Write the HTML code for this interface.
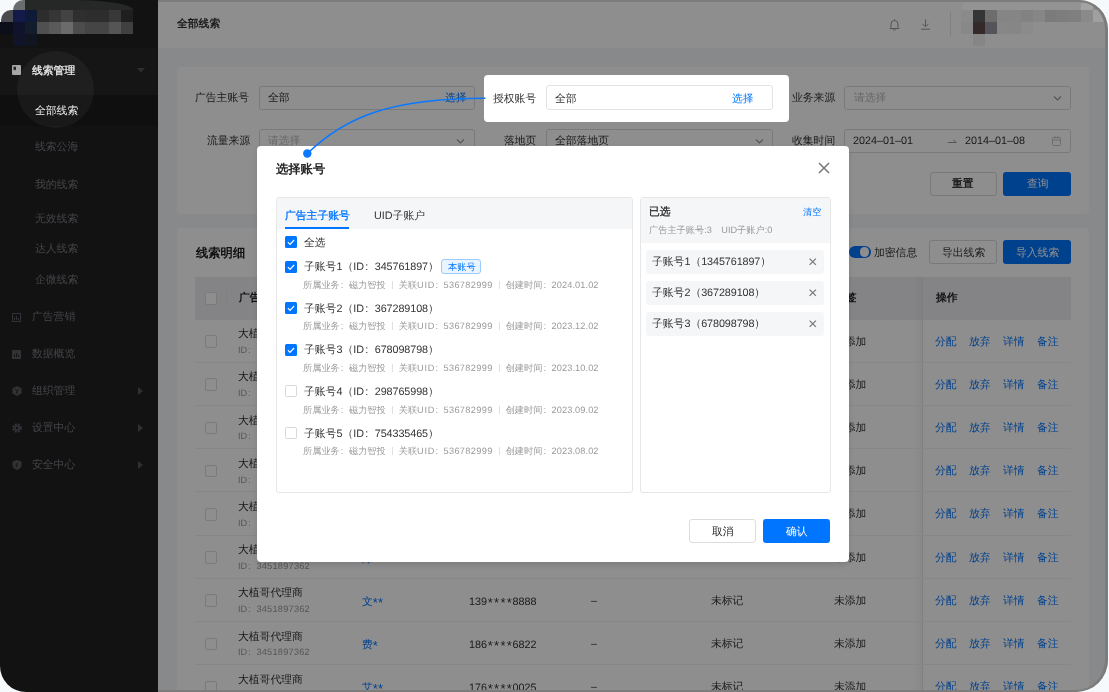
<!DOCTYPE html><html><head><meta charset="utf-8"><style>.col{display:inline-block;width:1em;text-indent:0.12em;}.dg{letter-spacing:-0.1px;}.ast{display:inline-block;width:6.4px;text-align:center;font-size:13px;position:relative;top:1.5px;}.sep{display:inline-block;width:1px;height:8px;background:#e0e0e0;margin:0 6px;vertical-align:-1px;}
html,body{margin:0;padding:0;width:1109px;height:692px;overflow:hidden;background:#f6f9fc;font-family:"Liberation Sans", sans-serif;}
.t{position:absolute;white-space:nowrap;text-rendering:geometricPrecision;will-change:transform;}
.b{position:absolute;box-sizing:border-box;}
#win{position:absolute;left:0;top:0;width:1108px;height:692px;border-radius:30px 29px 32px 26px;overflow:hidden;background:#f4f6f8;}
</style></head><body><div id="win">
<div class="b" style="left:158px;top:0px;width:950px;height:48px;background:#fff;"></div>
<div class="t" style="left:177px;top:16.30px;font-size:10.8px;line-height:16px;color:#1f1f1f;font-weight:400;-webkit-text-stroke:0.3px #1f1f1f;">全部线索</div>
<svg class="b" style="left:888px;top:18px" width="13" height="13" viewBox="0 0 13 13"><path d="M3 9.5V6a3.5 3.5 0 0 1 7 0v3.5l1 1H2z" fill="none" stroke="#999" stroke-width="1"/><path d="M5.2 11.3a1.4 1.4 0 0 0 2.6 0" fill="none" stroke="#999" stroke-width="1"/><path d="M6.5 1.2v1.2" stroke="#999" stroke-width="1"/></svg>
<svg class="b" style="left:919px;top:18px" width="13" height="13" viewBox="0 0 13 13"><path d="M6.5 1.5v7M3.5 5.8l3 3 3-3M2 11.2h9" fill="none" stroke="#999" stroke-width="1"/></svg>
<div class="b" style="left:950px;top:12px;width:1px;height:24px;background:#e6e6e6;"></div>
<div class="b" style="left:177px;top:67px;width:912px;height:147px;background:#fff;border-radius:4px;"></div>
<div class="t" style="left:195.4px;top:89.80px;font-size:10.8px;line-height:16px;color:#333;font-weight:400;">广告主账号</div>
<div class="b" style="left:258.5px;top:85.5px;width:216.0px;height:24.0px;background:#fff;border:1px solid #dcdcdc;border-radius:3px;"></div>
<div class="t" style="left:268px;top:89.80px;font-size:10.8px;line-height:16px;color:#333;font-weight:400;">全部</div>
<div class="t" style="left:444.5px;top:89.80px;font-size:10.8px;line-height:16px;color:#0075ff;font-weight:400;">选择</div>
<div class="t" style="left:792px;top:89.80px;font-size:10.8px;line-height:16px;color:#333;font-weight:400;">业务来源</div>
<div class="b" style="left:844px;top:85.5px;width:226.5px;height:24.0px;background:#fff;border:1px solid #dcdcdc;border-radius:3px;"></div>
<div class="t" style="left:853.5px;top:89.80px;font-size:10.8px;line-height:16px;color:#bbb;font-weight:400;">请选择</div>
<svg class="b" style="left:1052.5px;top:93.5px" width="9" height="8" viewBox="0 0 9 8"><path d="M1 2.5l3.5 3.5 3.5-3.5" fill="none" stroke="#999" stroke-width="1.1"/></svg>
<div class="t" style="left:206.6px;top:133.40px;font-size:10.8px;line-height:16px;color:#333;font-weight:400;">流量来源</div>
<div class="b" style="left:258.5px;top:128.8px;width:216.0px;height:24.0px;background:#fff;border:1px solid #dcdcdc;border-radius:3px;"></div>
<div class="t" style="left:268px;top:133.40px;font-size:10.8px;line-height:16px;color:#bbb;font-weight:400;">请选择</div>
<svg class="b" style="left:456.3px;top:137px" width="9" height="8" viewBox="0 0 9 8"><path d="M1 2.5l3.5 3.5 3.5-3.5" fill="none" stroke="#999" stroke-width="1.1"/></svg>
<div class="t" style="left:504px;top:133.40px;font-size:10.8px;line-height:16px;color:#333;font-weight:400;">落地页</div>
<div class="b" style="left:546px;top:128.8px;width:226.5px;height:24.0px;background:#fff;border:1px solid #dcdcdc;border-radius:3px;"></div>
<div class="t" style="left:555px;top:133.40px;font-size:10.8px;line-height:16px;color:#333;font-weight:400;">全部落地页</div>
<svg class="b" style="left:755px;top:136.8px" width="9" height="8" viewBox="0 0 9 8"><path d="M1 2.5l3.5 3.5 3.5-3.5" fill="none" stroke="#999" stroke-width="1.1"/></svg>
<div class="t" style="left:792px;top:133.40px;font-size:10.8px;line-height:16px;color:#333;font-weight:400;">收集时间</div>
<div class="b" style="left:844px;top:128.8px;width:226.5px;height:24.0px;background:#fff;border:1px solid #dcdcdc;border-radius:3px;"></div>
<div class="t" style="left:853px;top:133.40px;font-size:10.8px;line-height:16px;color:#333;font-weight:400;">2024–01–01</div>
<svg class="b" style="left:947.5px;top:137px" width="9" height="7" viewBox="0 0 9 7"><path d="M0 5.5h8.2L5.5 2.8" fill="none" stroke="#999" stroke-width="1"/></svg>
<div class="t" style="left:964.5px;top:133.40px;font-size:10.8px;line-height:16px;color:#333;font-weight:400;">2014–01–08</div>
<svg class="b" style="left:1051px;top:135px" width="11" height="11" viewBox="0 0 11 11"><rect x="1.5" y="2.5" width="8" height="8" rx="1" fill="none" stroke="#c4c4c4" stroke-width="1"/><path d="M1.5 5h8M4 1v2.5M7 1v2.5" stroke="#c4c4c4" stroke-width="1"/></svg>
<div class="b" style="left:929.5px;top:172px;width:67.5px;height:24px;background:#fff;border:1px solid #d9d9d9;border-radius:3px;"></div>
<div class="t" style="left:952.3px;top:176.30px;font-size:10.8px;line-height:16px;color:#1f1f1f;font-weight:400;-webkit-text-stroke:0.3px #1f1f1f;">重置</div>
<div class="b" style="left:1003px;top:172px;width:68px;height:24px;background:#0075ff;border-radius:3px;"></div>
<div class="t" style="left:1026.8px;top:176.30px;font-size:10.8px;line-height:16px;color:#fff;font-weight:400;">查询</div>
<div class="b" style="left:177px;top:227.5px;width:912px;height:472.5px;background:#fff;border-radius:4px;"></div>
<div class="t" style="left:195.5px;top:245.30px;font-size:12.3px;line-height:16px;color:#1f1f1f;font-weight:700;">线索明细</div>
<div class="b" style="left:849px;top:245.5px;width:21.5px;height:12.5px;background:#0075ff;border-radius:7px;"></div>
<div class="b" style="left:859.5px;top:247px;width:9.5px;height:9.5px;background:#fff;border-radius:50%;"></div>
<div class="t" style="left:874px;top:244.90px;font-size:10.8px;line-height:16px;color:#333;font-weight:400;">加密信息</div>
<div class="b" style="left:928.8px;top:239.5px;width:68.20000000000005px;height:24.5px;background:#fff;border:1px solid #d9d9d9;border-radius:3px;"></div>
<div class="t" style="left:942px;top:245.00px;font-size:10.8px;line-height:16px;color:#333;font-weight:400;">导出线索</div>
<div class="b" style="left:1003px;top:239.5px;width:68px;height:24.5px;background:#0075ff;border-radius:3px;"></div>
<div class="t" style="left:1016px;top:245.00px;font-size:10.8px;line-height:16px;color:#fff;font-weight:400;">导入线索</div>
<div class="b" style="left:195px;top:277px;width:876px;height:42.5px;background:#edeef0;"></div>
<div class="b" style="left:204.5px;top:292px;width:12.5px;height:12.5px;background:#fff;border:1px solid #dcdcdc;border-radius:2px;"></div>
<div class="b" style="left:225.5px;top:290px;width:1.0px;height:17.5px;background:#e6e6e6;"></div>
<div class="t" style="left:238.6px;top:290.30px;font-size:10.8px;line-height:16px;color:#1f1f1f;font-weight:700;">广告主账号</div>
<div class="t" style="left:362px;top:290.30px;font-size:10.8px;line-height:16px;color:#1f1f1f;font-weight:700;">客户姓名</div>
<div class="t" style="left:469.5px;top:290.30px;font-size:10.8px;line-height:16px;color:#1f1f1f;font-weight:700;">手机号</div>
<div class="t" style="left:590px;top:290.30px;font-size:10.8px;line-height:16px;color:#1f1f1f;font-weight:700;">微信</div>
<div class="t" style="left:710.8px;top:290.30px;font-size:10.8px;line-height:16px;color:#1f1f1f;font-weight:700;">标记</div>
<div class="t" style="left:835px;top:290.30px;font-size:10.8px;line-height:16px;color:#1f1f1f;font-weight:700;">标签</div>
<div class="t" style="left:936px;top:290.30px;font-size:10.8px;line-height:16px;color:#1f1f1f;font-weight:700;">操作</div>
<div class="b" style="left:912px;top:277px;width:10px;height:423px;background:linear-gradient(to right,rgba(0,0,0,0),rgba(0,0,0,0.035));"></div>
<div class="b" style="left:922px;top:277px;width:1px;height:423px;background:#e4e4e4;"></div>
<div class="b" style="left:204.5px;top:335.2px;width:12.5px;height:12.5px;background:#fff;border:1px solid #dcdcdc;border-radius:2px;"></div>
<div class="t" style="left:238px;top:326.10px;font-size:10.8px;line-height:16px;color:#333;font-weight:400;">大植哥代理商</div>
<div class="t" style="left:238px;top:341.90px;font-size:9.2px;line-height:16px;color:#999;font-weight:400;">ID<span class="col">:</span><span style="letter-spacing:0.25px">3451897362</span></div>
<div class="t" style="left:362.2px;top:333.50px;font-size:10.8px;line-height:16px;color:#0075ff;font-weight:400;">王<span class="ast" style="width:5.2px">*</span><span class="ast" style="width:5.2px">*</span></div>
<div class="t" style="left:834.2px;top:333.50px;font-size:10.8px;line-height:16px;color:#333;font-weight:400;">未添加</div>
<div class="t" style="left:934.8px;top:333.50px;font-size:10.8px;line-height:16px;color:#0075ff;font-weight:400;">分配</div>
<div class="t" style="left:968.6px;top:333.50px;font-size:10.8px;line-height:16px;color:#0075ff;font-weight:400;">放弃</div>
<div class="t" style="left:1003px;top:333.50px;font-size:10.8px;line-height:16px;color:#0075ff;font-weight:400;">详情</div>
<div class="t" style="left:1036.9px;top:333.50px;font-size:10.8px;line-height:16px;color:#0075ff;font-weight:400;">备注</div>
<div class="b" style="left:194.6px;top:361.7px;width:876.4px;height:1.0px;background:#f2f2f2;"></div>
<div class="b" style="left:204.5px;top:378.4px;width:12.5px;height:12.5px;background:#fff;border:1px solid #dcdcdc;border-radius:2px;"></div>
<div class="t" style="left:238px;top:369.30px;font-size:10.8px;line-height:16px;color:#333;font-weight:400;">大植哥代理商</div>
<div class="t" style="left:238px;top:385.10px;font-size:9.2px;line-height:16px;color:#999;font-weight:400;">ID<span class="col">:</span><span style="letter-spacing:0.25px">3451897362</span></div>
<div class="t" style="left:362.2px;top:376.70px;font-size:10.8px;line-height:16px;color:#0075ff;font-weight:400;">李<span class="ast" style="width:5.2px">*</span></div>
<div class="t" style="left:834.2px;top:376.70px;font-size:10.8px;line-height:16px;color:#333;font-weight:400;">未添加</div>
<div class="t" style="left:934.8px;top:376.70px;font-size:10.8px;line-height:16px;color:#0075ff;font-weight:400;">分配</div>
<div class="t" style="left:968.6px;top:376.70px;font-size:10.8px;line-height:16px;color:#0075ff;font-weight:400;">放弃</div>
<div class="t" style="left:1003px;top:376.70px;font-size:10.8px;line-height:16px;color:#0075ff;font-weight:400;">详情</div>
<div class="t" style="left:1036.9px;top:376.70px;font-size:10.8px;line-height:16px;color:#0075ff;font-weight:400;">备注</div>
<div class="b" style="left:194.6px;top:404.9px;width:876.4px;height:1.0px;background:#f2f2f2;"></div>
<div class="b" style="left:204.5px;top:421.6px;width:12.5px;height:12.5px;background:#fff;border:1px solid #dcdcdc;border-radius:2px;"></div>
<div class="t" style="left:238px;top:412.50px;font-size:10.8px;line-height:16px;color:#333;font-weight:400;">大植哥代理商</div>
<div class="t" style="left:238px;top:428.30px;font-size:9.2px;line-height:16px;color:#999;font-weight:400;">ID<span class="col">:</span><span style="letter-spacing:0.25px">3451897362</span></div>
<div class="t" style="left:362.2px;top:419.90px;font-size:10.8px;line-height:16px;color:#0075ff;font-weight:400;">张<span class="ast" style="width:5.2px">*</span><span class="ast" style="width:5.2px">*</span></div>
<div class="t" style="left:834.2px;top:419.90px;font-size:10.8px;line-height:16px;color:#333;font-weight:400;">未添加</div>
<div class="t" style="left:934.8px;top:419.90px;font-size:10.8px;line-height:16px;color:#0075ff;font-weight:400;">分配</div>
<div class="t" style="left:968.6px;top:419.90px;font-size:10.8px;line-height:16px;color:#0075ff;font-weight:400;">放弃</div>
<div class="t" style="left:1003px;top:419.90px;font-size:10.8px;line-height:16px;color:#0075ff;font-weight:400;">详情</div>
<div class="t" style="left:1036.9px;top:419.90px;font-size:10.8px;line-height:16px;color:#0075ff;font-weight:400;">备注</div>
<div class="b" style="left:194.6px;top:448.1px;width:876.4px;height:1.0px;background:#f2f2f2;"></div>
<div class="b" style="left:204.5px;top:464.8px;width:12.5px;height:12.5px;background:#fff;border:1px solid #dcdcdc;border-radius:2px;"></div>
<div class="t" style="left:238px;top:455.70px;font-size:10.8px;line-height:16px;color:#333;font-weight:400;">大植哥代理商</div>
<div class="t" style="left:238px;top:471.50px;font-size:9.2px;line-height:16px;color:#999;font-weight:400;">ID<span class="col">:</span><span style="letter-spacing:0.25px">3451897362</span></div>
<div class="t" style="left:362.2px;top:463.10px;font-size:10.8px;line-height:16px;color:#0075ff;font-weight:400;">赵<span class="ast" style="width:5.2px">*</span></div>
<div class="t" style="left:834.2px;top:463.10px;font-size:10.8px;line-height:16px;color:#333;font-weight:400;">未添加</div>
<div class="t" style="left:934.8px;top:463.10px;font-size:10.8px;line-height:16px;color:#0075ff;font-weight:400;">分配</div>
<div class="t" style="left:968.6px;top:463.10px;font-size:10.8px;line-height:16px;color:#0075ff;font-weight:400;">放弃</div>
<div class="t" style="left:1003px;top:463.10px;font-size:10.8px;line-height:16px;color:#0075ff;font-weight:400;">详情</div>
<div class="t" style="left:1036.9px;top:463.10px;font-size:10.8px;line-height:16px;color:#0075ff;font-weight:400;">备注</div>
<div class="b" style="left:194.6px;top:491.3px;width:876.4px;height:1.0px;background:#f2f2f2;"></div>
<div class="b" style="left:204.5px;top:508.0px;width:12.5px;height:12.5px;background:#fff;border:1px solid #dcdcdc;border-radius:2px;"></div>
<div class="t" style="left:238px;top:498.90px;font-size:10.8px;line-height:16px;color:#333;font-weight:400;">大植哥代理商</div>
<div class="t" style="left:238px;top:514.70px;font-size:9.2px;line-height:16px;color:#999;font-weight:400;">ID<span class="col">:</span><span style="letter-spacing:0.25px">3451897362</span></div>
<div class="t" style="left:362.2px;top:506.30px;font-size:10.8px;line-height:16px;color:#0075ff;font-weight:400;">刘<span class="ast" style="width:5.2px">*</span><span class="ast" style="width:5.2px">*</span></div>
<div class="t" style="left:834.2px;top:506.30px;font-size:10.8px;line-height:16px;color:#333;font-weight:400;">未添加</div>
<div class="t" style="left:934.8px;top:506.30px;font-size:10.8px;line-height:16px;color:#0075ff;font-weight:400;">分配</div>
<div class="t" style="left:968.6px;top:506.30px;font-size:10.8px;line-height:16px;color:#0075ff;font-weight:400;">放弃</div>
<div class="t" style="left:1003px;top:506.30px;font-size:10.8px;line-height:16px;color:#0075ff;font-weight:400;">详情</div>
<div class="t" style="left:1036.9px;top:506.30px;font-size:10.8px;line-height:16px;color:#0075ff;font-weight:400;">备注</div>
<div class="b" style="left:194.6px;top:534.5px;width:876.4px;height:1.0px;background:#f2f2f2;"></div>
<div class="b" style="left:204.5px;top:551.2px;width:12.5px;height:12.5px;background:#fff;border:1px solid #dcdcdc;border-radius:2px;"></div>
<div class="t" style="left:238px;top:542.10px;font-size:10.8px;line-height:16px;color:#333;font-weight:400;">大植哥代理商</div>
<div class="t" style="left:238px;top:557.90px;font-size:9.2px;line-height:16px;color:#999;font-weight:400;">ID<span class="col">:</span><span style="letter-spacing:0.25px">3451897362</span></div>
<div class="t" style="left:362.2px;top:549.50px;font-size:10.8px;line-height:16px;color:#0075ff;font-weight:400;">陈<span class="ast" style="width:5.2px">*</span></div>
<div class="t" style="left:834.2px;top:549.50px;font-size:10.8px;line-height:16px;color:#333;font-weight:400;">未添加</div>
<div class="t" style="left:934.8px;top:549.50px;font-size:10.8px;line-height:16px;color:#0075ff;font-weight:400;">分配</div>
<div class="t" style="left:968.6px;top:549.50px;font-size:10.8px;line-height:16px;color:#0075ff;font-weight:400;">放弃</div>
<div class="t" style="left:1003px;top:549.50px;font-size:10.8px;line-height:16px;color:#0075ff;font-weight:400;">详情</div>
<div class="t" style="left:1036.9px;top:549.50px;font-size:10.8px;line-height:16px;color:#0075ff;font-weight:400;">备注</div>
<div class="b" style="left:194.6px;top:577.7px;width:876.4px;height:1.0px;background:#f2f2f2;"></div>
<div class="b" style="left:204.5px;top:594.4000000000001px;width:12.5px;height:12.5px;background:#fff;border:1px solid #dcdcdc;border-radius:2px;"></div>
<div class="t" style="left:238px;top:585.30px;font-size:10.8px;line-height:16px;color:#333;font-weight:400;">大植哥代理商</div>
<div class="t" style="left:238px;top:601.10px;font-size:9.2px;line-height:16px;color:#999;font-weight:400;">ID<span class="col">:</span><span style="letter-spacing:0.25px">3451897362</span></div>
<div class="t" style="left:362.2px;top:592.70px;font-size:10.8px;line-height:16px;color:#0075ff;font-weight:400;">文<span class="ast" style="width:5.2px">*</span><span class="ast" style="width:5.2px">*</span></div>
<div class="t" style="left:468.5px;top:592.70px;font-size:10.8px;line-height:16px;color:#333;font-weight:400;">139<span class="ast">*</span><span class="ast">*</span><span class="ast">*</span><span class="ast">*</span>8888</div>
<div class="t" style="left:590.5px;top:592.70px;font-size:10.8px;line-height:16px;color:#333;font-weight:400;">–</div>
<div class="t" style="left:710.8px;top:592.70px;font-size:10.8px;line-height:16px;color:#333;font-weight:400;">未标记</div>
<div class="t" style="left:834.2px;top:592.70px;font-size:10.8px;line-height:16px;color:#333;font-weight:400;">未添加</div>
<div class="t" style="left:934.8px;top:592.70px;font-size:10.8px;line-height:16px;color:#0075ff;font-weight:400;">分配</div>
<div class="t" style="left:968.6px;top:592.70px;font-size:10.8px;line-height:16px;color:#0075ff;font-weight:400;">放弃</div>
<div class="t" style="left:1003px;top:592.70px;font-size:10.8px;line-height:16px;color:#0075ff;font-weight:400;">详情</div>
<div class="t" style="left:1036.9px;top:592.70px;font-size:10.8px;line-height:16px;color:#0075ff;font-weight:400;">备注</div>
<div class="b" style="left:194.6px;top:620.9000000000001px;width:876.4px;height:1.0px;background:#f2f2f2;"></div>
<div class="b" style="left:204.5px;top:637.6px;width:12.5px;height:12.5px;background:#fff;border:1px solid #dcdcdc;border-radius:2px;"></div>
<div class="t" style="left:238px;top:628.50px;font-size:10.8px;line-height:16px;color:#333;font-weight:400;">大植哥代理商</div>
<div class="t" style="left:238px;top:644.30px;font-size:9.2px;line-height:16px;color:#999;font-weight:400;">ID<span class="col">:</span><span style="letter-spacing:0.25px">3451897362</span></div>
<div class="t" style="left:362.2px;top:635.90px;font-size:10.8px;line-height:16px;color:#0075ff;font-weight:400;">费<span class="ast" style="width:5.2px">*</span></div>
<div class="t" style="left:468.5px;top:635.90px;font-size:10.8px;line-height:16px;color:#333;font-weight:400;">186<span class="ast">*</span><span class="ast">*</span><span class="ast">*</span><span class="ast">*</span>6822</div>
<div class="t" style="left:590.5px;top:635.90px;font-size:10.8px;line-height:16px;color:#333;font-weight:400;">–</div>
<div class="t" style="left:710.8px;top:635.90px;font-size:10.8px;line-height:16px;color:#333;font-weight:400;">未标记</div>
<div class="t" style="left:834.2px;top:635.90px;font-size:10.8px;line-height:16px;color:#333;font-weight:400;">未添加</div>
<div class="t" style="left:934.8px;top:635.90px;font-size:10.8px;line-height:16px;color:#0075ff;font-weight:400;">分配</div>
<div class="t" style="left:968.6px;top:635.90px;font-size:10.8px;line-height:16px;color:#0075ff;font-weight:400;">放弃</div>
<div class="t" style="left:1003px;top:635.90px;font-size:10.8px;line-height:16px;color:#0075ff;font-weight:400;">详情</div>
<div class="t" style="left:1036.9px;top:635.90px;font-size:10.8px;line-height:16px;color:#0075ff;font-weight:400;">备注</div>
<div class="b" style="left:194.6px;top:664.1px;width:876.4px;height:1.0px;background:#f2f2f2;"></div>
<div class="b" style="left:204.5px;top:680.8px;width:12.5px;height:12.5px;background:#fff;border:1px solid #dcdcdc;border-radius:2px;"></div>
<div class="t" style="left:238px;top:671.70px;font-size:10.8px;line-height:16px;color:#333;font-weight:400;">大植哥代理商</div>
<div class="t" style="left:238px;top:687.50px;font-size:9.2px;line-height:16px;color:#999;font-weight:400;">ID<span class="col">:</span><span style="letter-spacing:0.25px">3451897362</span></div>
<div class="t" style="left:362.2px;top:679.10px;font-size:10.8px;line-height:16px;color:#0075ff;font-weight:400;">艾<span class="ast" style="width:5.2px">*</span><span class="ast" style="width:5.2px">*</span></div>
<div class="t" style="left:468.5px;top:679.10px;font-size:10.8px;line-height:16px;color:#333;font-weight:400;">176<span class="ast">*</span><span class="ast">*</span><span class="ast">*</span><span class="ast">*</span>0025</div>
<div class="t" style="left:590.5px;top:679.10px;font-size:10.8px;line-height:16px;color:#333;font-weight:400;">–</div>
<div class="t" style="left:710.8px;top:679.10px;font-size:10.8px;line-height:16px;color:#333;font-weight:400;">未标记</div>
<div class="t" style="left:834.2px;top:679.10px;font-size:10.8px;line-height:16px;color:#333;font-weight:400;">未添加</div>
<div class="t" style="left:934.8px;top:679.10px;font-size:10.8px;line-height:16px;color:#0075ff;font-weight:400;">分配</div>
<div class="t" style="left:968.6px;top:679.10px;font-size:10.8px;line-height:16px;color:#0075ff;font-weight:400;">放弃</div>
<div class="t" style="left:1003px;top:679.10px;font-size:10.8px;line-height:16px;color:#0075ff;font-weight:400;">详情</div>
<div class="t" style="left:1036.9px;top:679.10px;font-size:10.8px;line-height:16px;color:#0075ff;font-weight:400;">备注</div>
<div class="b" style="left:194.6px;top:707.3px;width:876.4px;height:1.0px;background:#f2f2f2;"></div>
<div class="b" style="left:0px;top:0px;width:1108px;height:692px;background:rgba(0,0,0,0.443);"></div>
<div class="b" style="left:0px;top:0px;width:158px;height:692px;background:#121212;"></div>
<div class="b" style="left:0px;top:94.5px;width:158px;height:31.0px;background:#0f0f0f;"></div>
<div class="b" style="left:0px;top:48px;width:158px;height:46.5px;background:#151515;"></div>
<div class="b" style="left:17.3px;top:50.5px;width:77px;height:77px;border-radius:50%;background:rgba(255,255,255,0.045);"></div>
<svg class="b" style="left:12px;top:65px" width="9" height="10" viewBox="0 0 9 10"><rect x="0" y="0" width="9" height="10" rx="1" fill="#a6a6a6"/><path d="M1.6 1.8h2.3v3.7L2.75 4.6 1.6 5.5z" fill="#1a1a1a"/></svg>
<div class="t" style="left:32px;top:62.50px;font-size:10.8px;line-height:16px;color:#ececec;font-weight:400;-webkit-text-stroke:0.3px #ececec;">线索管理</div>
<svg class="b" style="left:137px;top:68px" width="8" height="5" viewBox="0 0 8 5"><path d="M0 0h8L4 4.5z" fill="#2e2e32"/></svg>
<div class="t" style="left:35px;top:102.60px;font-size:10.8px;line-height:16px;color:#f0f0f0;font-weight:400;">全部线索</div>
<div class="t" style="left:35px;top:139.40px;font-size:10.8px;line-height:16px;color:#45454a;font-weight:400;">线索公海</div>
<div class="t" style="left:35px;top:176.70px;font-size:10.8px;line-height:16px;color:#45454a;font-weight:400;">我的线索</div>
<div class="t" style="left:35px;top:210.50px;font-size:10.8px;line-height:16px;color:#45454a;font-weight:400;">无效线索</div>
<div class="t" style="left:35px;top:241.30px;font-size:10.8px;line-height:16px;color:#45454a;font-weight:400;">达人线索</div>
<div class="t" style="left:35px;top:271.60px;font-size:10.8px;line-height:16px;color:#45454a;font-weight:400;">企微线索</div>
<div class="t" style="left:32px;top:309.10px;font-size:10.8px;line-height:16px;color:#45454a;font-weight:400;">广告营销</div>
<div class="t" style="left:32px;top:346.20px;font-size:10.8px;line-height:16px;color:#45454a;font-weight:400;">数据概览</div>
<div class="t" style="left:32px;top:383.00px;font-size:10.8px;line-height:16px;color:#45454a;font-weight:400;">组织管理</div>
<svg class="b" style="left:138px;top:386.7px" width="6" height="8" viewBox="0 0 6 8"><path d="M0 0v8l5-4z" fill="#303034"/></svg>
<div class="t" style="left:32px;top:419.90px;font-size:10.8px;line-height:16px;color:#45454a;font-weight:400;">设置中心</div>
<svg class="b" style="left:138px;top:423.6px" width="6" height="8" viewBox="0 0 6 8"><path d="M0 0v8l5-4z" fill="#303034"/></svg>
<div class="t" style="left:32px;top:457.20px;font-size:10.8px;line-height:16px;color:#45454a;font-weight:400;">安全中心</div>
<svg class="b" style="left:138px;top:460.9px" width="6" height="8" viewBox="0 0 6 8"><path d="M0 0v8l5-4z" fill="#303034"/></svg>
<svg class="b" style="left:12px;top:312.5px" width="9" height="9" viewBox="0 0 9 9"><rect x=".5" y=".5" width="8" height="8" fill="none" stroke="#323236"/><path d="M2.5 7V4.5M4.5 7V3M6.5 7V5" stroke="#323236"/></svg>
<svg class="b" style="left:12px;top:349.5px" width="9" height="9" viewBox="0 0 9 9"><rect x="0" y="0" width="9" height="9" rx="1" fill="#323236"/><path d="M2.5 7V4.5M4.5 7V3M6.5 7V5" stroke="#141414"/></svg>
<svg class="b" style="left:12px;top:386px" width="10" height="10" viewBox="0 0 10 10"><path d="M5 0l4.5 2.5v5L5 10 .5 7.5v-5z" fill="#323236"/><path d="M3 3l2 2 2-2M5 5v3" stroke="#141414" fill="none"/></svg>
<svg class="b" style="left:12px;top:423px" width="10" height="10" viewBox="0 0 10 10"><circle cx="5" cy="5" r="3.6" fill="none" stroke="#323236" stroke-width="2.4" stroke-dasharray="1.9 1"/><circle cx="5" cy="5" r="3" fill="#323236"/><circle cx="5" cy="5" r="1.3" fill="#141414"/></svg>
<svg class="b" style="left:12px;top:460px" width="10" height="10" viewBox="0 0 10 10"><path d="M5 0l4.5 1.5v3.5c0 2.5-2 4.2-4.5 5-2.5-.8-4.5-2.5-4.5-5V1.5z" fill="#323236"/><path d="M5.5 2.5L3.8 5.3h1.5L4.5 7.5" stroke="#141414" fill="none" stroke-width=".8"/></svg>
<div class="b" style="left:484px;top:74.5px;width:305px;height:47.2px;background:#fff;border-radius:4px;"></div>
<div class="t" style="left:493.3px;top:90.50px;font-size:10.8px;line-height:16px;color:#333;font-weight:400;">授权账号</div>
<div class="b" style="left:546px;top:85px;width:226.5px;height:24.700000000000003px;background:#fff;border:1px solid #e3e3e3;border-radius:3px;"></div>
<div class="t" style="left:555px;top:90.50px;font-size:10.8px;line-height:16px;color:#333;font-weight:400;">全部</div>
<div class="t" style="left:732px;top:90.50px;font-size:10.8px;line-height:16px;color:#0075ff;font-weight:400;">选择</div>
<div class="b" style="left:257px;top:145.6px;width:591.5px;height:416.4px;background:#fff;border-radius:4px;box-shadow:0 3px 6px rgba(0,0,0,0.12);"></div>
<div class="t" style="left:276.3px;top:160.50px;font-size:12.3px;line-height:16px;color:#262626;font-weight:700;">选择账号</div>
<svg class="b" style="left:818px;top:162px" width="12" height="12" viewBox="0 0 12 12"><path d="M1 1l10 10M11 1L1 11" stroke="#777" stroke-width="1.5"/></svg>
<div class="b" style="left:275.7px;top:197px;width:357.3px;height:295.5px;background:#fff;border:1px solid #e6e6e6;border-radius:3px;"></div>
<div class="b" style="left:276.7px;top:198px;width:355.3px;height:31.30000000000001px;background:#f5f6f8;border-top-left-radius:2px;border-top-right-radius:2px;"></div>
<div class="t" style="left:284.8px;top:207.90px;font-size:10.8px;line-height:16px;color:#0075ff;font-weight:400;-webkit-text-stroke:0.3px #0075ff;">广告主子账号</div>
<div class="b" style="left:284.8px;top:227.3px;width:64.30000000000001px;height:2.0px;background:#0075ff;"></div>
<div class="t" style="left:374.4px;top:207.70px;font-size:10.8px;line-height:16px;color:#333;font-weight:400;">UID子账户</div>
<svg class="b" style="left:284.8px;top:236px" width="12" height="12" viewBox="0 0 12 12"><rect width="12" height="12" rx="1.5" fill="#0075ff"/><path d="M2.9 6.2l2.1 2.1 4.1-4.3" fill="none" stroke="#fff" stroke-width="1.2"/></svg>
<div class="t" style="left:303.7px;top:235.20px;font-size:10.8px;line-height:16px;color:#333;font-weight:400;">全选</div>
<svg class="b" style="left:284.8px;top:260.5px" width="12" height="12" viewBox="0 0 12 12"><rect width="12" height="12" rx="1.5" fill="#0075ff"/><path d="M2.9 6.2l2.1 2.1 4.1-4.3" fill="none" stroke="#fff" stroke-width="1.2"/></svg>
<div class="t" style="left:304px;top:259.20px;font-size:10.8px;line-height:16px;color:#333;font-weight:400;">子账号1（ID<span class="col">:</span><span class="dg">345761897</span>）</div>
<div class="t" style="left:303.4px;top:276.70px;font-size:9.2px;line-height:16px;color:#999;font-weight:400;">所属业务<span class="col">:</span>磁力智投<span class="sep"></span>关联<span style="letter-spacing:0.7px">UI</span>D<span class="col">:</span><span style="letter-spacing:0.35px">536782999</span><span class="sep"></span>创建时间<span class="col">:</span><span style="letter-spacing:0.1px">2024.01.02</span></div>
<div class="b" style="left:441px;top:258.8px;width:40px;height:15.0px;background:#eaf4ff;border:1px solid #99cbff;border-radius:3px;"></div>
<div class="t" style="left:447.7px;top:258.90px;font-size:9.2px;line-height:16px;color:#0075ff;font-weight:400;">本账号</div>
<svg class="b" style="left:284.8px;top:302.1px" width="12" height="12" viewBox="0 0 12 12"><rect width="12" height="12" rx="1.5" fill="#0075ff"/><path d="M2.9 6.2l2.1 2.1 4.1-4.3" fill="none" stroke="#fff" stroke-width="1.2"/></svg>
<div class="t" style="left:304px;top:300.80px;font-size:10.8px;line-height:16px;color:#333;font-weight:400;">子账号2（ID<span class="col">:</span><span class="dg">367289108</span>）</div>
<div class="t" style="left:303.4px;top:318.30px;font-size:9.2px;line-height:16px;color:#999;font-weight:400;">所属业务<span class="col">:</span>磁力智投<span class="sep"></span>关联<span style="letter-spacing:0.7px">UI</span>D<span class="col">:</span><span style="letter-spacing:0.35px">536782999</span><span class="sep"></span>创建时间<span class="col">:</span><span style="letter-spacing:0.1px">2023.12.02</span></div>
<svg class="b" style="left:284.8px;top:343.7px" width="12" height="12" viewBox="0 0 12 12"><rect width="12" height="12" rx="1.5" fill="#0075ff"/><path d="M2.9 6.2l2.1 2.1 4.1-4.3" fill="none" stroke="#fff" stroke-width="1.2"/></svg>
<div class="t" style="left:304px;top:342.40px;font-size:10.8px;line-height:16px;color:#333;font-weight:400;">子账号3（ID<span class="col">:</span><span class="dg">678098798</span>）</div>
<div class="t" style="left:303.4px;top:359.90px;font-size:9.2px;line-height:16px;color:#999;font-weight:400;">所属业务<span class="col">:</span>磁力智投<span class="sep"></span>关联<span style="letter-spacing:0.7px">UI</span>D<span class="col">:</span><span style="letter-spacing:0.35px">536782999</span><span class="sep"></span>创建时间<span class="col">:</span><span style="letter-spacing:0.1px">2023.10.02</span></div>
<div class="b" style="left:284.8px;top:385.3px;width:12.0px;height:12.0px;background:#fff;border:1px solid #d9d9d9;border-radius:1.5px;"></div>
<div class="t" style="left:304px;top:384.00px;font-size:10.8px;line-height:16px;color:#333;font-weight:400;">子账号4（ID<span class="col">:</span><span class="dg">298765998</span>）</div>
<div class="t" style="left:303.4px;top:401.50px;font-size:9.2px;line-height:16px;color:#999;font-weight:400;">所属业务<span class="col">:</span>磁力智投<span class="sep"></span>关联<span style="letter-spacing:0.7px">UI</span>D<span class="col">:</span><span style="letter-spacing:0.35px">536782999</span><span class="sep"></span>创建时间<span class="col">:</span><span style="letter-spacing:0.1px">2023.09.02</span></div>
<div class="b" style="left:284.8px;top:426.9px;width:12.0px;height:12.0px;background:#fff;border:1px solid #d9d9d9;border-radius:1.5px;"></div>
<div class="t" style="left:304px;top:425.60px;font-size:10.8px;line-height:16px;color:#333;font-weight:400;">子账号5（ID<span class="col">:</span><span class="dg">754335465</span>）</div>
<div class="t" style="left:303.4px;top:443.10px;font-size:9.2px;line-height:16px;color:#999;font-weight:400;">所属业务<span class="col">:</span>磁力智投<span class="sep"></span>关联<span style="letter-spacing:0.7px">UI</span>D<span class="col">:</span><span style="letter-spacing:0.35px">536782999</span><span class="sep"></span>创建时间<span class="col">:</span><span style="letter-spacing:0.1px">2023.08.02</span></div>
<div class="b" style="left:639.6px;top:197px;width:191.39999999999998px;height:295.5px;background:#fff;border:1px solid #e6e6e6;border-radius:3px;"></div>
<div class="b" style="left:640.6px;top:198px;width:189.39999999999998px;height:44.80000000000001px;background:#f5f6f8;"></div>
<div class="t" style="left:649px;top:204.00px;font-size:10.8px;line-height:16px;color:#262626;font-weight:400;-webkit-text-stroke:0.3px #262626;">已选</div>
<div class="t" style="left:802.7px;top:204.00px;font-size:9.2px;line-height:16px;color:#0075ff;font-weight:400;">清空</div>
<div class="t" style="left:649px;top:222.00px;font-size:9.2px;line-height:16px;color:#999;font-weight:400;">广告主子账号:3<span style="margin-left:9.5px">UID子账户:0</span></div>
<div class="b" style="left:645.6px;top:249.6px;width:178.39999999999998px;height:24.299999999999983px;background:#f5f6f8;border-radius:3px;"></div>
<div class="t" style="left:652.1px;top:253.90px;font-size:10.8px;line-height:16px;color:#333;font-weight:400;">子账号1（<span class="dg">1345761897</span>）</div>
<svg class="b" style="left:809px;top:258.4px" width="7.5" height="7.5" viewBox="0 0 7.5 7.5"><path d="M.6.6l6.3 6.3M6.9.6L.6 6.9" stroke="#7a7a7a" stroke-width="1.3"/></svg>
<div class="b" style="left:645.6px;top:280.6px;width:178.39999999999998px;height:24.30000000000001px;background:#f5f6f8;border-radius:3px;"></div>
<div class="t" style="left:652.1px;top:284.90px;font-size:10.8px;line-height:16px;color:#333;font-weight:400;">子账号2（<span class="dg">367289108</span>）</div>
<svg class="b" style="left:809px;top:289.40000000000003px" width="7.5" height="7.5" viewBox="0 0 7.5 7.5"><path d="M.6.6l6.3 6.3M6.9.6L.6 6.9" stroke="#7a7a7a" stroke-width="1.3"/></svg>
<div class="b" style="left:645.6px;top:311.6px;width:178.39999999999998px;height:24.30000000000001px;background:#f5f6f8;border-radius:3px;"></div>
<div class="t" style="left:652.1px;top:315.90px;font-size:10.8px;line-height:16px;color:#333;font-weight:400;">子账号3（<span class="dg">678098798</span>）</div>
<svg class="b" style="left:809px;top:320.40000000000003px" width="7.5" height="7.5" viewBox="0 0 7.5 7.5"><path d="M.6.6l6.3 6.3M6.9.6L.6 6.9" stroke="#7a7a7a" stroke-width="1.3"/></svg>
<div class="b" style="left:688.9px;top:518.5px;width:67.30000000000007px;height:24.5px;background:#fff;border:1px solid #dcdcdc;border-radius:3px;"></div>
<div class="t" style="left:711.6px;top:523.80px;font-size:10.8px;line-height:16px;color:#262626;font-weight:400;">取消</div>
<div class="b" style="left:762.8px;top:518.5px;width:67.5px;height:24.5px;background:#0075ff;border-radius:3px;"></div>
<div class="t" style="left:785.8px;top:523.80px;font-size:10.8px;line-height:16px;color:#fff;font-weight:400;">确认</div>
<svg class="b" style="left:0;top:0" width="1109" height="692" viewBox="0 0 1109 692"><path d="M307.3 153.5C345 117 390 98.2 485.5 98.2" fill="none" stroke="#0a78ff" stroke-width="1.6"/><circle cx="307.3" cy="153.5" r="4.2" fill="#0a78ff"/></svg>
<div class="b" style="left:961px;top:0px;width:120px;height:10px;background:#939393;border-top-left-radius:12px;"></div>
<div class="b" style="left:1081px;top:3px;width:12px;height:7px;background:#a3a3a3;"></div>
<div class="b" style="left:961px;top:10px;width:12px;height:12px;background:#8a8a8a;"></div>
<div class="b" style="left:973px;top:10px;width:12px;height:12px;background:#353535;"></div>
<div class="b" style="left:985px;top:10px;width:12px;height:12px;background:#6e6d6b;"></div>
<div class="b" style="left:997px;top:10px;width:12px;height:12px;background:#858585;"></div>
<div class="b" style="left:1009px;top:10px;width:12px;height:12px;background:#858585;"></div>
<div class="b" style="left:1021px;top:10px;width:12px;height:12px;background:#828282;"></div>
<div class="b" style="left:1033px;top:10px;width:12px;height:12px;background:#868686;"></div>
<div class="b" style="left:1045px;top:10px;width:12px;height:12px;background:#7b7b7b;"></div>
<div class="b" style="left:1057px;top:10px;width:12px;height:12px;background:#7d7d7d;"></div>
<div class="b" style="left:1069px;top:10px;width:12px;height:12px;background:#7f7f7f;"></div>
<div class="b" style="left:1081px;top:10px;width:12px;height:12px;background:#8a8a8a;"></div>
<div class="b" style="left:961px;top:22px;width:12px;height:12px;background:#888888;"></div>
<div class="b" style="left:973px;top:22px;width:12px;height:12px;background:#352a2a;"></div>
<div class="b" style="left:985px;top:22px;width:12px;height:12px;background:#55545a;"></div>
<div class="b" style="left:997px;top:22px;width:12px;height:12px;background:#878787;"></div>
<div class="b" style="left:1009px;top:22px;width:12px;height:12px;background:#868686;"></div>
<div class="b" style="left:1021px;top:22px;width:12px;height:12px;background:#8b8b8b;"></div>
<div class="b" style="left:973px;top:34px;width:12px;height:12px;background:#868686;"></div>
<div class="b" style="left:1093px;top:10px;width:12px;height:12px;background:#a0a0a0;"></div>
<div class="b" style="left:158px;top:0;width:950px;height:692px;border-style:solid;border-color:#7c7c7c;border-width:2px 3px 2px 0;border-radius:0 29px 32px 0;"></div>
</div>
<div class="b" style="left:0px;top:0px;width:25px;height:22px;background:#f6f9fc;"></div>
<div class="b" style="left:13px;top:0px;width:12px;height:10px;background:#6a6d6d;border-top-left-radius:10px;"></div>
<div class="b" style="left:25px;top:0px;width:108px;height:10px;background:#262827;border-top-right-radius:60px 10px;"></div>
<div class="b" style="left:1px;top:10px;width:12px;height:12px;background:#4a4b4c;border-top-left-radius:10px;"></div>
<div class="b" style="left:13px;top:10px;width:12px;height:12px;background:#141a4a;"></div>
<div class="b" style="left:25px;top:10px;width:12px;height:12px;background:#0f1a38;"></div>
<div class="b" style="left:37px;top:10px;width:12px;height:12px;background:#2d2d2d;"></div>
<div class="b" style="left:49px;top:10px;width:12px;height:12px;background:#363636;"></div>
<div class="b" style="left:61px;top:10px;width:12px;height:12px;background:#434343;"></div>
<div class="b" style="left:73px;top:10px;width:12px;height:12px;background:#2f2f2f;"></div>
<div class="b" style="left:85px;top:10px;width:12px;height:12px;background:#2d2d2d;"></div>
<div class="b" style="left:97px;top:10px;width:12px;height:12px;background:#2d2d2d;"></div>
<div class="b" style="left:109px;top:10px;width:12px;height:12px;background:#383838;"></div>
<div class="b" style="left:121px;top:10px;width:12px;height:12px;background:#1f1f1f;"></div>
<div class="b" style="left:1px;top:22px;width:12px;height:12px;background:#0c0f1a;"></div>
<div class="b" style="left:13px;top:22px;width:12px;height:12px;background:#10132b;"></div>
<div class="b" style="left:25px;top:22px;width:12px;height:12px;background:#121c2b;"></div>
<div class="b" style="left:37px;top:22px;width:12px;height:12px;background:#505050;"></div>
<div class="b" style="left:49px;top:22px;width:12px;height:12px;background:#5a5a5a;"></div>
<div class="b" style="left:61px;top:22px;width:12px;height:12px;background:#6b6b6b;"></div>
<div class="b" style="left:73px;top:22px;width:12px;height:12px;background:#4c4c4c;"></div>
<div class="b" style="left:85px;top:22px;width:12px;height:12px;background:#454545;"></div>
<div class="b" style="left:97px;top:22px;width:12px;height:12px;background:#454545;"></div>
<div class="b" style="left:109px;top:22px;width:12px;height:12px;background:#555555;"></div>
<div class="b" style="left:121px;top:22px;width:12px;height:12px;background:#404040;"></div>
<div class="b" style="left:13px;top:34px;width:12px;height:12px;background:#0f1428;"></div>
<div class="b" style="left:25px;top:34px;width:12px;height:12px;background:#101520;"></div>
<div class="b" style="left:0px;top:22px;width:1px;height:12px;background:#0c0f1a;"></div>
</body></html>
